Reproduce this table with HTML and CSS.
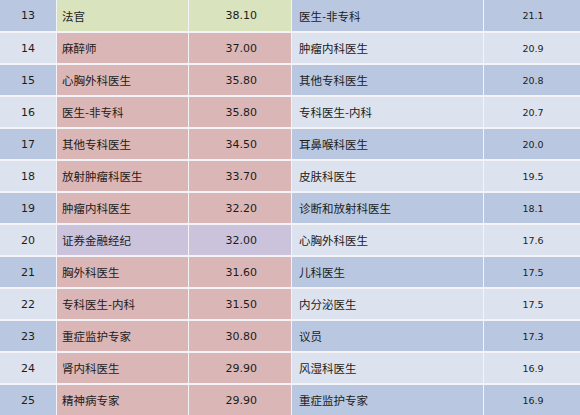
FILE: index.html
```html
<!DOCTYPE html>
<html lang="zh">
<head>
<meta charset="utf-8">
<link rel="stylesheet" href="styles.css">
</head>
<body>
<div class="table">
  <div class="c num dk">13</div><div class="c name g">法官</div><div class="c val g">38.10</div><div class="c name2 dk">医生-非专科</div><div class="c val2 dk">21.1</div>
  <div class="c num lt">14</div><div class="c name r">麻醉师</div><div class="c val r">37.00</div><div class="c name2 lt">肿瘤内科医生</div><div class="c val2 lt">20.9</div>
  <div class="c num dk">15</div><div class="c name r">心胸外科医生</div><div class="c val r">35.80</div><div class="c name2 dk">其他专科医生</div><div class="c val2 dk">20.8</div>
  <div class="c num lt">16</div><div class="c name r">医生-非专科</div><div class="c val r">35.80</div><div class="c name2 lt">专科医生-内科</div><div class="c val2 lt">20.7</div>
  <div class="c num dk">17</div><div class="c name r">其他专科医生</div><div class="c val r">34.50</div><div class="c name2 dk">耳鼻喉科医生</div><div class="c val2 dk">20.0</div>
  <div class="c num lt">18</div><div class="c name r">放射肿瘤科医生</div><div class="c val r">33.70</div><div class="c name2 lt">皮肤科医生</div><div class="c val2 lt">19.5</div>
  <div class="c num dk">19</div><div class="c name r">肿瘤内科医生</div><div class="c val r">32.20</div><div class="c name2 dk">诊断和放射科医生</div><div class="c val2 dk">18.1</div>
  <div class="c num lt">20</div><div class="c name p">证券金融经纪</div><div class="c val p">32.00</div><div class="c name2 lt">心胸外科医生</div><div class="c val2 lt">17.6</div>
  <div class="c num dk">21</div><div class="c name r">胸外科医生</div><div class="c val r">31.60</div><div class="c name2 dk">儿科医生</div><div class="c val2 dk">17.5</div>
  <div class="c num lt">22</div><div class="c name r">专科医生-内科</div><div class="c val r">31.50</div><div class="c name2 lt">内分泌医生</div><div class="c val2 lt">17.5</div>
  <div class="c num dk">23</div><div class="c name r">重症监护专家</div><div class="c val r">30.80</div><div class="c name2 dk">议员</div><div class="c val2 dk">17.3</div>
  <div class="c num lt">24</div><div class="c name r">肾内科医生</div><div class="c val r">29.90</div><div class="c name2 lt">风湿科医生</div><div class="c val2 lt">16.9</div>
  <div class="c num dk">25</div><div class="c name r">精神病专家</div><div class="c val r">29.90</div><div class="c name2 dk">重症监护专家</div><div class="c val2 dk">16.9</div>
</div>
</body>
</html>
```
FILE: styles.css
```css
html, body {
  margin: 0;
  padding: 0;
  background: #ffffff;
}
.table {
  width: 580px;
  height: 415px;
  display: grid;
  grid-template-columns: 56px 131px 102px 191px 96px;
  grid-template-rows: 31px repeat(12, 30px);
  column-gap: 1px;
  row-gap: 2px;
  background: #f4f4f8;
  overflow: hidden;
  color: #1c1c1c;
  font-family: "DejaVu Sans", "Noto Sans CJK SC", sans-serif;
}
.c {
  display: flex;
  align-items: center;
  white-space: nowrap;
}
.num {
  justify-content: center;
  font-size: 11px;
}
.name {
  padding-left: 5px;
  font-family: "Noto Sans CJK SC", sans-serif;
  font-size: 11.5px;
}
.val {
  justify-content: flex-end;
  padding-right: 34px;
  font-size: 11px;
}
.name2 {
  padding-left: 7px;
  font-family: "Noto Sans CJK SC", sans-serif;
  font-size: 11.5px;
}
.val2 {
  justify-content: center;
  font-size: 9.5px;
  padding-left: 2px;
}
.dk { background: #b9c8e0; }
.lt { background: #dce3ef; }
.g { background: #d9e3bd; }
.r { background: #dbb6b6; }
.p { background: #cbc3dc; }
```
